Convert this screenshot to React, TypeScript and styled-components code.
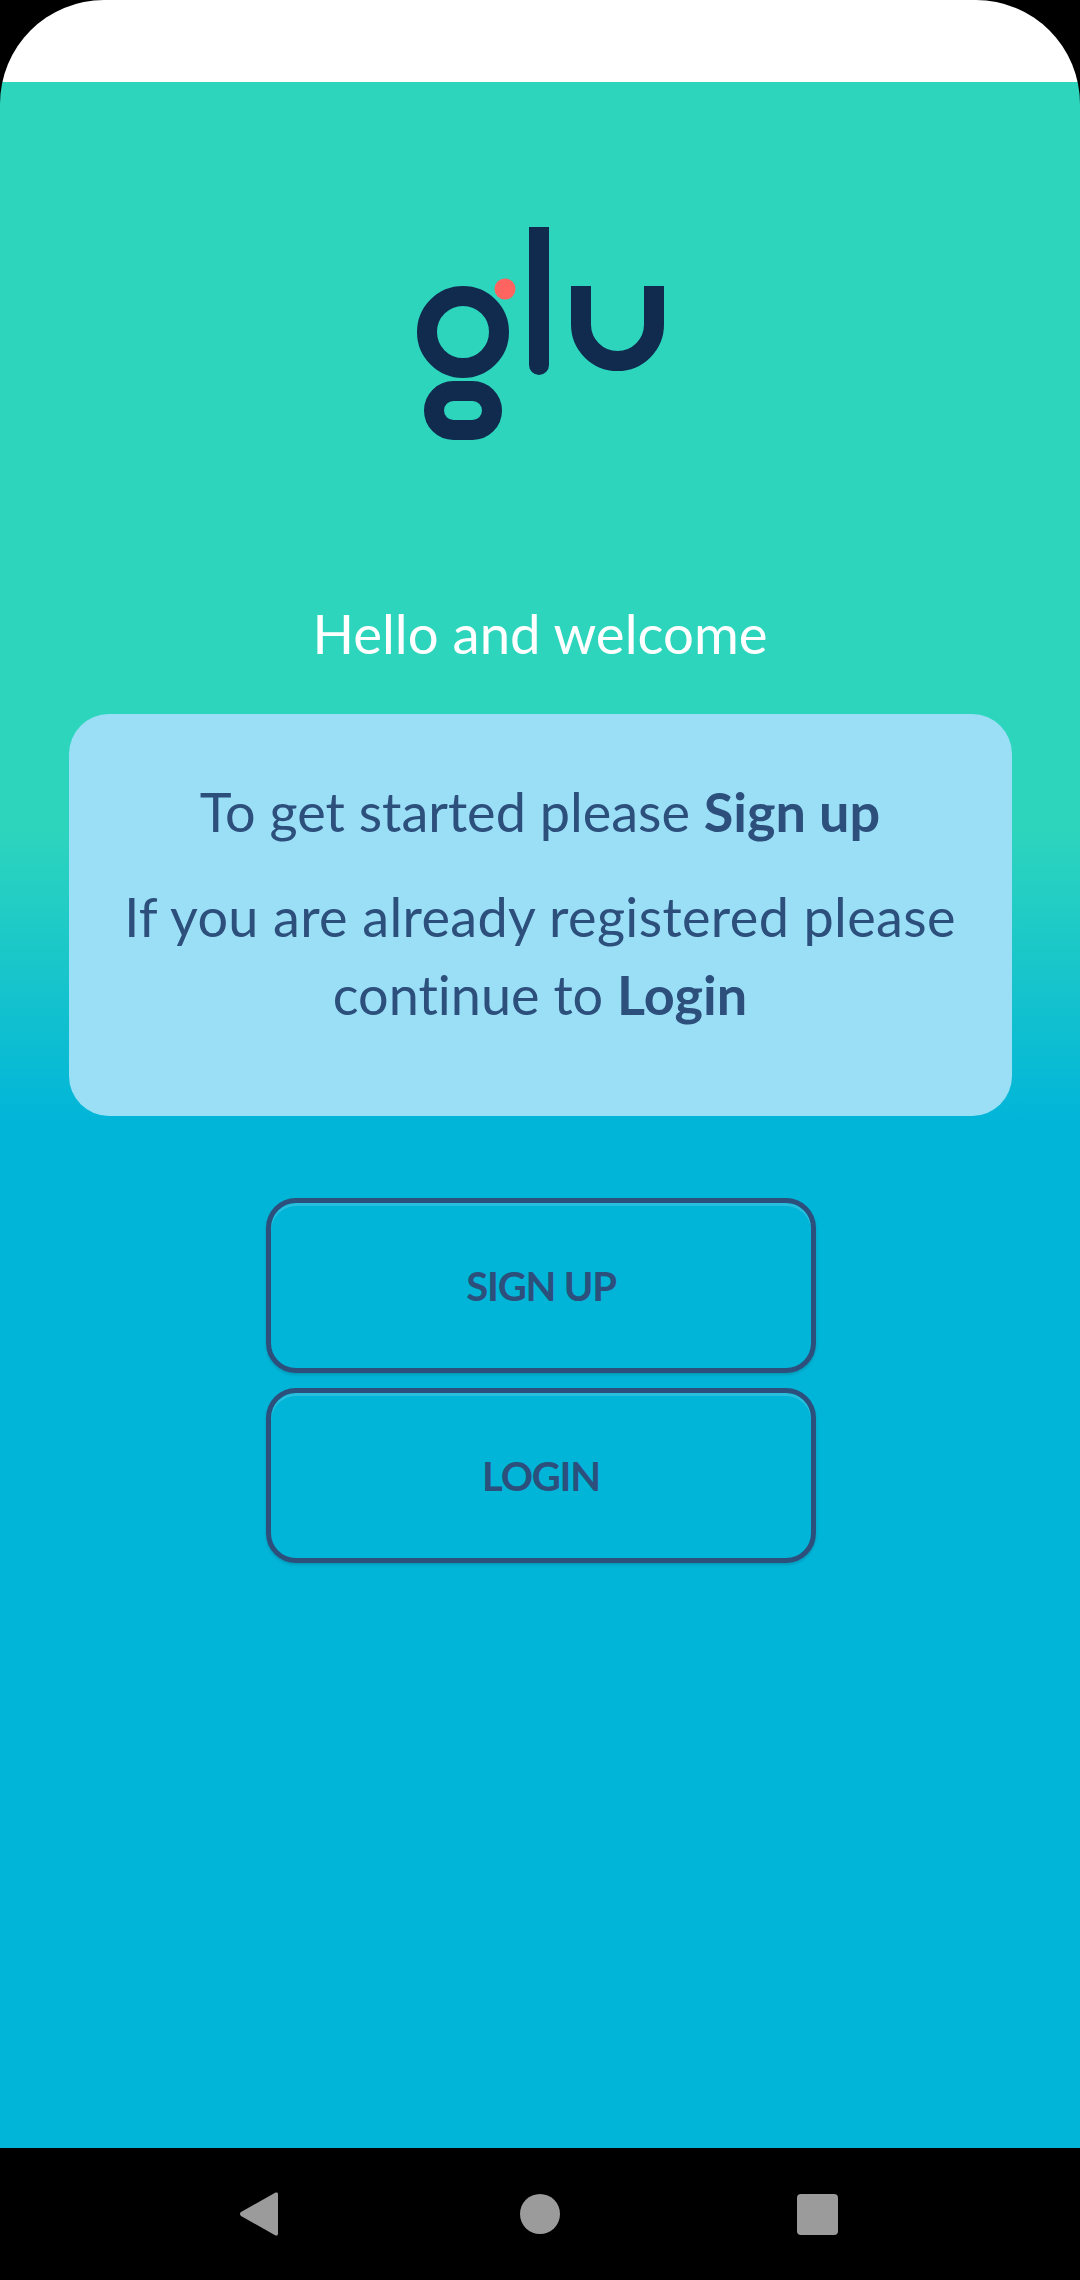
import * as React from 'react'
import styled, { createGlobalStyle } from 'styled-components'

const GlobalStyle = createGlobalStyle`
  html, body {
    margin: 0;
    padding: 0;
    background: #000;
  }
`

const App: React.FC = () => (
  <>
    <GlobalStyle />
    <Phone>
      <Screen>
        <StatusBar />
        <Main>
          <LogoWrap>
            <GluLogo />
          </LogoWrap>
          <Welcome>Hello and welcome</Welcome>
          <InfoCard>
            <InfoText>To get started please <strong>Sign up</strong></InfoText>
            <InfoText><WideLine>If you are already registered please</WideLine> continue to <strong>Login</strong></InfoText>
          </InfoCard>
          <Actions>
            <ActionButton>SIGN UP</ActionButton>
            <ActionButton>LOGIN</ActionButton>
          </Actions>
        </Main>
      </Screen>
      <NavBar>
        <NavIcon viewBox="0 0 38 44" $width={38} $gap={242}>
          <path d="M35.500 .6 1 20a2.500 2.500 0 0 0 0 4l34.500 19.400A1.700 1.700 0 0 0 38 42V2A1.700 1.700 0 0 0 35.500 .6z" />
        </NavIcon>
        <NavIcon viewBox="0 0 40 40" $width={40} $gap={237}>
          <circle cx="20" cy="20" r="20" />
        </NavIcon>
        <NavIcon viewBox="0 0 41 41" $width={41} $gap={0}>
          <rect width="41" height="41" rx="4" />
        </NavIcon>
      </NavBar>
    </Phone>
  </>
)

const GluLogo: React.FC = () => (
  <svg width="250" height="215" viewBox="-2 0 250 215" aria-label="glu">
    <circle cx="46" cy="105" r="36" fill="none" stroke="#112B4F" strokeWidth="20" />
    <path d="M112 0h20v138a10 10 0 0 1-20 0z" fill="#112B4F" />
    <path d="M164 59v38.500a36.500 36.500 0 0 0 73 0V59" fill="none" stroke="#112B4F" strokeWidth="20" />
    <rect x="17" y="164" width="58" height="39" rx="19.500" fill="none" stroke="#112B4F" strokeWidth="20" />
    <circle cx="88" cy="62" r="10.500" fill="#FF6460" />
  </svg>
)

const Phone = styled.div`
  display: flex;
  flex-direction: column;
  width: 1080px;
  height: 2280px;
  background: #000;
  font-family: Lato, "Open Sans", sans-serif;
  font-variant-ligatures: none;
`

const Screen = styled.div`
  display: flex;
  flex: 1;
  flex-direction: column;
  min-height: 0;
  border-radius: 104px 104px 0 0;
  overflow: hidden;
`

const StatusBar = styled.div`
  height: 82px;
  flex-shrink: 0;
  background: #fff;
`

const Main = styled.main`
  display: flex;
  flex: 1;
  flex-direction: column;
  align-items: center;
  background: linear-gradient(180deg, #2dd5bd 0, #2dd5bd 748px, #01b5d9 1040px, #01b5d9 100%);
`

const LogoWrap = styled.div`
  display: flex;
  justify-content: center;
  width: 100%;
  height: 215px;
  padding-top: 145px;
`

const Welcome = styled.h1`
  margin: 159px 0 0;
  font-size: 54.500px;
  line-height: 65px;
  font-weight: 400;
  color: #fff;
`

const InfoCard = styled.section`
  box-sizing: border-box;
  width: 943px;
  height: 402px;
  margin-top: 48px;
  padding: 59px 30px 0;
  border-radius: 40px;
  background: #9bdff6;
  text-align: center;
`

const InfoText = styled.p`
  margin: 0 0 27px;
  font-size: 54px;
  line-height: 78px;
  color: #2c4f7c;

  strong {
    font-weight: 700;
  }
`

const WideLine = styled.span`
  letter-spacing: 0.360px;
`

const Actions = styled.div`
  display: flex;
  flex-direction: column;
  gap: 15px;
  margin: 82px 0 0 2px;
`

const ActionButton = styled.button`
  box-sizing: border-box;
  width: 550px;
  height: 175px;
  padding: 0;
  border: 5px solid #2c4f7c;
  border-radius: 30px;
  background: transparent;
  box-shadow: inset 0 3px 0 rgba(255, 255, 255, 0.15), 0 2px 3px rgba(0, 0, 0, 0.15);
  font-family: inherit;
  font-size: 40px;
  font-weight: 700;
  letter-spacing: -1.200px;
  color: #2c4f7c;
`

const NavBar = styled.nav`
  display: flex;
  align-items: center;
  flex-shrink: 0;
  height: 132px;
  padding-left: 240px;
  background: #000;
`

const NavIcon = styled.svg<{ $width: number; $gap: number }>`
  width: ${(p) => p.$width}px;
  margin-right: ${(p) => p.$gap}px;
  fill: #9b9b9b;
`

export default App
